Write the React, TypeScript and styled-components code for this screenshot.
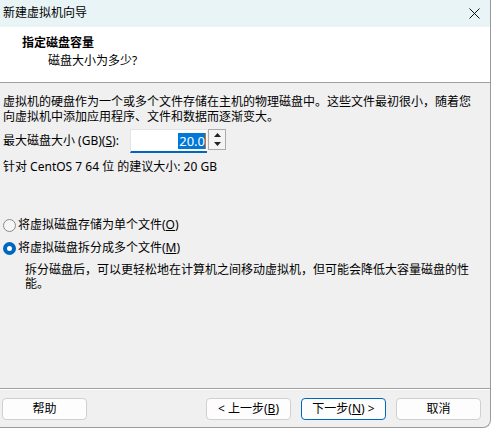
import { FC } from 'react';
import styled, { createGlobalStyle } from 'styled-components';

const GlobalStyle = createGlobalStyle`
  html, body {
    margin: 0;
    padding: 0;
    background: #ffffff;
  }
  body {
    font-family: 'Noto Sans', 'Noto Sans CJK SC', sans-serif;
    font-size: 12px;
    color: #000;
  }
`;

const Window = styled.div`
  width: 490px;
  height: 427px;
  display: flex;
  flex-direction: column;
  border-right: 1px solid #9a9a9a;
  border-bottom: 1px solid #9a9a9a;
  border-bottom-right-radius: 8px;
  overflow: hidden;
  background: #f0f0f0;
`;

const TitleBar = styled.div`
  height: 27px;
  flex: none;
  display: flex;
  align-items: center;
  justify-content: space-between;
  padding: 0 10px 2px 3px;
  box-sizing: border-box;
  background: #e8f4f6;
`;

const TitleText = styled.span`
  font-size: 12px;
  line-height: 14px;
`;

const CloseIcon = styled.svg`
  width: 11px;
  height: 11px;
  margin-top: 2px;
`;

const Header = styled.div`
  height: 56px;
  flex: none;
  background: #ffffff;
  padding: 8px 0 0 22px;
  box-sizing: border-box;
  border-bottom: 1px solid #a0a0a0;
`;

const HeaderTitle = styled.div`
  font-weight: 700;
  font-size: 12px;
  line-height: 16px;
`;

const HeaderSub = styled.div`
  margin: 2px 0 0 26px;
  line-height: 16px;
`;

const Body = styled.div`
  flex: 1;
  padding: 11px 0 0 3px;
  display: flex;
  flex-direction: column;
`;

const Paragraph = styled.p`
  margin: 0;
  line-height: 15px;
`;

const SizeRow = styled.div`
  display: flex;
  align-items: center;
  margin-top: 5px;
  height: 24px;
`;

const Label = styled.span`
  width: 127px;
  line-height: 14px;
  white-space: nowrap;
`;

const Key = styled.span`
  text-decoration: underline;
`;

const Input = styled.div`
  width: 77px;
  height: 24px;
  box-sizing: border-box;
  background: #ffffff;
  border-top: 1px solid #e3e3e3;
  border-left: 1px solid #e3e3e3;
  border-bottom: 2px solid #0067c0;
  display: flex;
  justify-content: flex-end;
  align-items: center;
  padding-right: 1px;
`;

const Selected = styled.span`
  background: #0078d7;
  color: #ffffff;
  font-size: 13px;
  line-height: 16px;
  padding: 0 0 0 1px;
  border-right: 1px solid #e36c0a;
`;

const Spinner = styled.div`
  width: 18px;
  height: 21px;
  margin: 0 0 3px 1px;
  box-sizing: border-box;
  border: 1px solid #ababab;
  background: #f4f4f4;
  display: flex;
  flex-direction: column;
  justify-content: space-around;
  align-items: center;
  padding: 1px 0;
`;

const Hint = styled.div`
  margin-top: 7px;
  line-height: 14px;
`;

const RadioGroup = styled.div`
  margin-top: 44px;
  display: flex;
  flex-direction: column;
  gap: 9px;
`;

const RadioRow = styled.div`
  display: flex;
  align-items: center;
  gap: 2px;
  height: 14px;
  line-height: 14px;
`;

const RadioDot = styled.span<{ checked?: boolean }>`
  width: 13px;
  height: 13px;
  box-sizing: border-box;
  border-radius: 50%;
  flex: none;
  background: ${({ checked }) => (checked ? '#ffffff' : '#f6f6f6')};
  border: ${({ checked }) => (checked ? '4px solid #0067c0' : '1px solid #8a8a8a')};
`;

const RadioNote = styled.p`
  margin: 8px 0 0 22px;
  line-height: 14px;
`;

const Footer = styled.div`
  height: 39px;
  flex: none;
  border-top: 1px solid #a0a0a0;
  box-shadow: inset 0 1px 0 #ffffff;
  display: flex;
  align-items: flex-start;
  padding: 9px 9px 0 2px;
  box-sizing: border-box;
  gap: 10px;
`;

const Spacer = styled.div`
  flex: 1;
`;

const Button = styled.button<{ primary?: boolean }>`
  width: 85px;
  height: 22px;
  box-sizing: border-box;
  font-family: inherit;
  font-size: 12px;
  color: #000;
  background: #fdfdfd;
  border: 1px solid ${({ primary }) => (primary ? '#0067c0' : '#d0d0d0')};
  border-radius: 4px;
  padding: 0;
  line-height: 18px;
`;

const App: FC = () => (
  <>
    <GlobalStyle />
    <Window>
      <TitleBar>
        <TitleText>新建虚拟机向导</TitleText>
        <CloseIcon viewBox="0 0 11 11">
          <path d="M0.5 0.5 L10.5 10.5 M10.5 0.5 L0.5 10.5" stroke="#111" strokeWidth="1" />
        </CloseIcon>
      </TitleBar>
      <Header>
        <HeaderTitle>指定磁盘容量</HeaderTitle>
        <HeaderSub>磁盘大小为多少?</HeaderSub>
      </Header>
      <Body>
        <Paragraph>
          虚拟机的硬盘作为一个或多个文件存储在主机的物理磁盘中。这些文件最初很小，随着您
          <br />
          向虚拟机中添加应用程序、文件和数据而逐渐变大。
        </Paragraph>
        <SizeRow>
          <Label>
            最大磁盘大小 (GB)(<Key>S</Key>):
          </Label>
          <Input>
            <Selected>20.0</Selected>
          </Input>
          <Spinner>
            <svg width="7" height="4" viewBox="0 0 7 4">
              <path d="M3.5 0 L7 4 L0 4 Z" fill="#222" />
            </svg>
            <svg width="7" height="4" viewBox="0 0 7 4">
              <path d="M0 0 L7 0 L3.5 4 Z" fill="#222" />
            </svg>
          </Spinner>
        </SizeRow>
        <Hint>针对 CentOS 7 64 位 的建议大小: 20 GB</Hint>
        <RadioGroup>
          <RadioRow>
            <RadioDot />
            <span>
              将虚拟磁盘存储为单个文件(<Key>O</Key>)
            </span>
          </RadioRow>
          <RadioRow>
            <RadioDot checked />
            <span>
              将虚拟磁盘拆分成多个文件(<Key>M</Key>)
            </span>
          </RadioRow>
        </RadioGroup>
        <RadioNote>
          拆分磁盘后，可以更轻松地在计算机之间移动虚拟机，但可能会降低大容量磁盘的性
          <br />
          能。
        </RadioNote>
      </Body>
      <Footer>
        <Button>帮助</Button>
        <Spacer />
        <Button>
          &lt; 上一步(<Key>B</Key>)
        </Button>
        <Button primary>
          下一步(<Key>N</Key>) &gt;
        </Button>
        <Button>取消</Button>
      </Footer>
    </Window>
  </>
);

export default App;
